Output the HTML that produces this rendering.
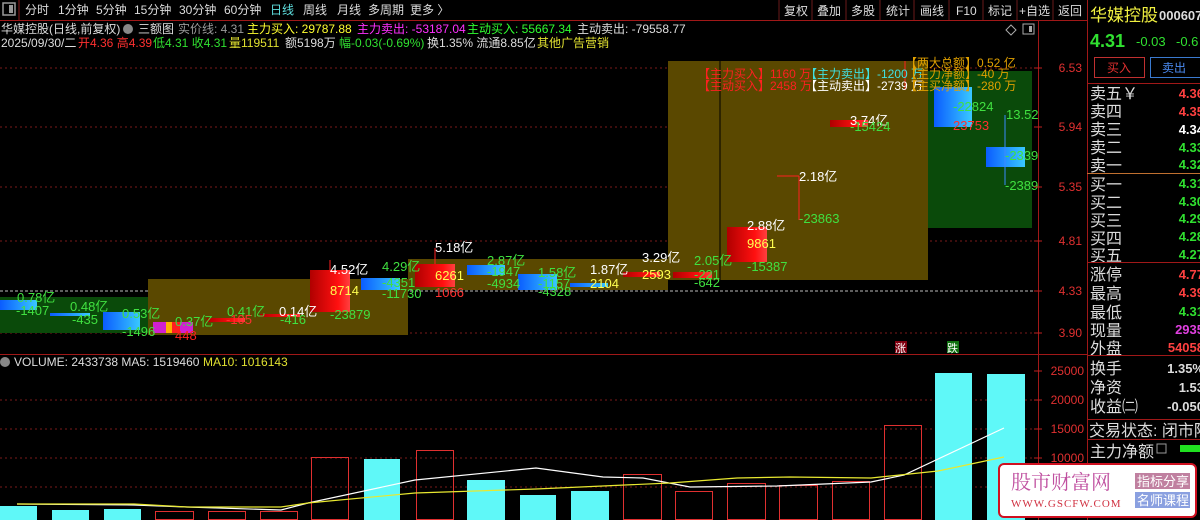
<!DOCTYPE html>
<html><head><meta charset="utf-8"><style>
html,body{margin:0;padding:0;background:#000;width:1200px;height:520px;overflow:hidden}
svg{display:block;font-family:"Liberation Sans","Noto Sans CJK SC",sans-serif}
</style></head><body>
<svg width="1200" height="520" viewBox="0 0 1200 520" xmlns="http://www.w3.org/2000/svg">
<defs>
<linearGradient id="bl" x1="0" x2="1" y1="0" y2="0"><stop offset="0" stop-color="#0a5cff"/><stop offset="1" stop-color="#39c8ff"/></linearGradient>
<linearGradient id="rd" x1="0" x2="1" y1="0" y2="0"><stop offset="0" stop-color="#b00000"/><stop offset="0.7" stop-color="#ff1010"/><stop offset="1" stop-color="#ff4040"/></linearGradient>
</defs>
<rect width="1200" height="520" fill="#000"/>
<rect x="3" y="3" width="12" height="12" fill="none" stroke="#999" stroke-width="1.5"/>
<rect x="9" y="5" width="4" height="8" fill="#999"/>
<line x1="19" y1="0" x2="19" y2="20" stroke="#8a1a1a"/>
<g font-size="12" fill="#ddd">
<text x="25" y="14">分时</text><text x="58" y="14">1分钟</text><text x="96" y="14">5分钟</text><text x="134" y="14">15分钟</text><text x="179" y="14">30分钟</text><text x="224" y="14">60分钟</text>
<text x="270" y="14" fill="#5fe0e0">日线</text><text x="303" y="14">周线</text><text x="337" y="14">月线</text><text x="368" y="14">多周期</text><text x="410" y="14">更多 〉</text>
</g>
<g font-size="12" fill="#ddd">
<text x="784" y="15">复权</text><text x="817" y="15">叠加</text><text x="851" y="15">多股</text><text x="886" y="15">统计</text><text x="920" y="15">画线</text><text x="956" y="15">F10</text><text x="988" y="15">标记</text><text x="1019" y="15">+自选</text><text x="1058" y="15">返回</text>
</g>
<g stroke="#6a1a1a"><line x1="779" y1="0" x2="779" y2="20"/><line x1="812" y1="0" x2="812" y2="20"/><line x1="846" y1="0" x2="846" y2="20"/><line x1="880" y1="0" x2="880" y2="20"/><line x1="914" y1="0" x2="914" y2="20"/><line x1="949" y1="0" x2="949" y2="20"/><line x1="983" y1="0" x2="983" y2="20"/><line x1="1017" y1="0" x2="1017" y2="20"/><line x1="1053" y1="0" x2="1053" y2="20"/></g>
<line x1="0" y1="20.5" x2="1087" y2="20.5" stroke="#a01818"/>
<g font-size="12">
<text x="1" y="33" fill="#ddd">华媒控股(日线,前复权)</text>
<circle cx="128" cy="29" r="5" fill="#888"/>
<text x="138" y="33" fill="#ddd">三额图</text>
<text x="178" y="33" fill="#999">实价线: 4.31</text>
<text x="247" y="33" fill="#ffff30">主力买入: 29787.88</text>
<text x="357" y="33" fill="#ff30ff">主力卖出: -53187.04</text>
<text x="467" y="33" fill="#30ff30">主动买入: 55667.34</text>
<text x="577" y="33" fill="#ddd">主动卖出: -79558.77</text>
<text x="1" y="47" fill="#ddd">2025/09/30/二</text>
<text x="78" y="47" fill="#ff3030">开4.36 高4.39</text>
<text x="153" y="47" fill="#30e030">低4.31 收4.31</text>
<text x="229" y="47" fill="#e0e030">量119511</text>
<text x="285" y="47" fill="#ddd">额5198万</text>
<text x="339" y="47" fill="#30e030">幅-0.03(-0.69%)</text>
<text x="427" y="47" fill="#ddd">换1.35% 流通8.85亿</text>
<text x="537" y="47" fill="#e0e030">其他广告营销</text>
</g>
<g stroke="#7a1a1a" stroke-dasharray="2,3"><line x1="0" y1="68" x2="1038" y2="68"/><line x1="0" y1="127" x2="1038" y2="127"/><line x1="0" y1="187" x2="1038" y2="187"/><line x1="0" y1="241" x2="1038" y2="241"/><line x1="0" y1="333" x2="1038" y2="333"/>
<line x1="0" y1="400" x2="1038" y2="400"/><line x1="0" y1="429" x2="1038" y2="429"/><line x1="0" y1="458" x2="1038" y2="458"/><line x1="0" y1="487" x2="1038" y2="487"/></g>
<line x1="0" y1="291" x2="1038" y2="291" stroke="#bbb" stroke-dasharray="3,2"/>
<rect x="0" y="297" width="148" height="36" fill="#0a4a0a"/>
<rect x="148" y="279" width="260" height="56" fill="#5a4800"/>
<rect x="408" y="259" width="260" height="31" fill="#5a4800"/>
<rect x="668" y="61" width="260" height="219" fill="#5a4800"/>
<line x1="720" y1="61" x2="720" y2="280" stroke="#000"/>
<rect x="928" y="71" width="104" height="157" fill="#0a4a0a"/>
<rect x="0" y="300" width="37" height="10" fill="url(#bl)"/>
<rect x="50" y="313" width="40" height="3" fill="url(#bl)"/>
<rect x="103" y="312" width="37" height="18" fill="url(#bl)"/>
<rect x="153" y="322" width="40" height="11" fill="#d020d0"/><rect x="166" y="322" width="6" height="11" fill="#ffb000"/><rect x="172" y="322" width="8" height="11" fill="#ff2020"/>
<rect x="207" y="318" width="38" height="4" fill="url(#rd)"/>
<rect x="260" y="314" width="40" height="3" fill="url(#rd)"/>
<rect x="310" y="270" width="40" height="42" fill="url(#rd)"/>
<rect x="361" y="278" width="39" height="12" fill="url(#bl)"/>
<rect x="415" y="264" width="40" height="23" fill="url(#rd)"/>
<rect x="467" y="265" width="38" height="10" fill="url(#bl)"/>
<rect x="518" y="274" width="39" height="16" fill="url(#bl)"/>
<rect x="570" y="283" width="38" height="4" fill="url(#bl)"/>
<rect x="623" y="272" width="37" height="5" fill="url(#rd)"/>
<rect x="673" y="272" width="39" height="6" fill="url(#rd)"/>
<rect x="727" y="227" width="40" height="35" fill="url(#rd)"/>
<rect x="830" y="120" width="38" height="7" fill="url(#rd)"/>
<rect x="934" y="87" width="38" height="40" fill="url(#bl)"/>
<rect x="986" y="147" width="39" height="20" fill="url(#bl)"/>
<g stroke="#ff2020"><line x1="330" y1="260" x2="330" y2="270"/><line x1="435" y1="248" x2="435" y2="264"/><line x1="799" y1="176" x2="799" y2="220"/><line x1="777" y1="176" x2="799" y2="176"/><line x1="905" y1="61" x2="905" y2="90"/></g>
<line x1="1005" y1="115" x2="1005" y2="185" stroke="#3a8aff"/>
<g font-size="13">
<text x="17" y="302" fill="#40e040">0.78亿</text><text x="16" y="315" fill="#40e040">-1407</text>
<text x="70" y="311" fill="#40e040">0.48亿</text><text x="72" y="324" fill="#40e040">-435</text>
<text x="122" y="318" fill="#40e040">0.53亿</text><text x="122" y="336" fill="#40e040">-1496</text>
<text x="175" y="326" fill="#40e040">0.37亿</text><text x="175" y="340" fill="#ff2020">448</text>
<text x="227" y="316" fill="#40e040">0.41亿</text><text x="226" y="324" fill="#ff3030">-105</text>
<text x="279" y="316" fill="#fff">0.14亿</text><text x="280" y="324" fill="#40e040">-416</text>
<text x="330" y="274" fill="#fff">4.52亿</text><text x="330" y="295" fill="#ffff50">8714</text><text x="330" y="319" fill="#40e040">-23879</text>
<text x="382" y="271" fill="#40e040">4.29亿</text><text x="382" y="287" fill="#40e040">-4351</text><text x="382" y="298" fill="#40e040">-11730</text>
<text x="435" y="252" fill="#fff">5.18亿</text><text x="435" y="280" fill="#ffff50">6261</text><text x="435" y="297" fill="#ff3030">1066</text>
<text x="487" y="265" fill="#40e040">2.87亿</text><text x="487" y="276" fill="#40e040">-1947</text><text x="487" y="288" fill="#40e040">-4934</text>
<text x="538" y="277" fill="#40e040">1.58亿</text><text x="538" y="288" fill="#40e040">-1157</text><text x="538" y="296" fill="#40e040">-4328</text>
<text x="590" y="274" fill="#fff">1.87亿</text><text x="590" y="288" fill="#ffff50">2104</text>
<text x="642" y="262" fill="#fff">3.29亿</text><text x="642" y="279" fill="#ffff50">2593</text>
<text x="694" y="265" fill="#40e040">2.05亿</text><text x="694" y="279" fill="#40e040">-221</text><text x="694" y="287" fill="#40e040">-642</text>
<text x="747" y="230" fill="#fff">2.88亿</text><text x="747" y="248" fill="#ffff50">9861</text><text x="747" y="271" fill="#40e040">-15387</text>
<text x="799" y="181" fill="#fff">2.18亿</text><text x="799" y="223" fill="#40e040">-23863</text>
<text x="850" y="125" fill="#fff">3.74亿</text><text x="850" y="131" fill="#40e040">-15424</text>
<text x="953" y="111" fill="#40e040">-22824</text><text x="953" y="130" fill="#ff3030">23753</text>
<text x="1006" y="119" fill="#40e040">13.52</text><text x="1005" y="160" fill="#40e040">-2339</text><text x="1005" y="190" fill="#40e040">-2389</text>
</g>
<g font-size="12">
<text x="698" y="78" fill="#ff2020">【主力买入】1160 万</text>
<text x="698" y="90" fill="#ff2020">【主动买入】2458 万</text>
<text x="805" y="78" fill="#40e0e0">【主力卖出】-1200 万</text>
<text x="805" y="90" fill="#fff">【主动卖出】-2739 万</text>
<text x="905" y="67" fill="#e0a000">【两大总额】0.52 亿</text>
<text x="905" y="78" fill="#e0a000">【主力净额】-40 万</text>
<text x="905" y="90" fill="#e0a000">【主买净额】-280 万</text>
</g>
<rect x="895" y="341" width="12" height="12" fill="#800010"/><text x="895" y="352" font-size="11" fill="#fff">涨</text>
<rect x="947" y="341" width="12" height="12" fill="#107010"/><text x="947" y="352" font-size="11" fill="#fff">跌</text>
<path d="M1011 25 l5 5 -5 5 -5 -5z" fill="none" stroke="#aaa"/>
<rect x="1023" y="24" width="11" height="10" fill="none" stroke="#aaa"/><rect x="1029" y="26" width="3" height="6" fill="#aaa"/>
<line x1="1038.5" y1="20" x2="1038.5" y2="520" stroke="#a01818"/>
<g stroke="#c02020"><line x1="1034" y1="68" x2="1042" y2="68"/><line x1="1034" y1="127" x2="1042" y2="127"/><line x1="1034" y1="187" x2="1042" y2="187"/><line x1="1034" y1="241" x2="1042" y2="241"/><line x1="1034" y1="291" x2="1042" y2="291"/><line x1="1034" y1="333" x2="1042" y2="333"/>
<line x1="1034" y1="371" x2="1042" y2="371"/><line x1="1034" y1="400" x2="1042" y2="400"/><line x1="1034" y1="429" x2="1042" y2="429"/><line x1="1034" y1="458" x2="1042" y2="458"/></g>
<g font-size="12" fill="#e03030" text-anchor="end"><text x="1082" y="72">6.53</text><text x="1082" y="131">5.94</text><text x="1082" y="191">5.35</text><text x="1082" y="245">4.81</text><text x="1082" y="295">4.33</text><text x="1082" y="337">3.90</text>
<text x="1084" y="375">25000</text><text x="1084" y="404">20000</text><text x="1084" y="433">15000</text><text x="1084" y="462">10000</text></g>
<line x1="0" y1="354.5" x2="1087" y2="354.5" stroke="#a01818"/>
<circle cx="5" cy="362" r="5" fill="#888"/>
<text x="14" y="366" font-size="12" fill="#ddd">VOLUME: 2433738  MA5: 1519460</text>
<text x="203" y="366" font-size="12" fill="#e0e030">MA10: 1016143</text>
<g fill="#5ff8f8"><rect x="0" y="506" width="37" height="14"/><rect x="52" y="510" width="37" height="10"/><rect x="104" y="509" width="37" height="11"/><rect x="364" y="459" width="36" height="61"/><rect x="467" y="480" width="38" height="40"/><rect x="520" y="495" width="36" height="25"/><rect x="571" y="491" width="38" height="29"/><rect x="935" y="373" width="37" height="147"/><rect x="987" y="374" width="38" height="146"/></g>
<g fill="none" stroke="#e03030"><rect x="155.5" y="511.5" width="38" height="8"/><rect x="208.5" y="511.5" width="37" height="8"/><rect x="260.5" y="511.5" width="37" height="8"/><rect x="311.5" y="457.5" width="37" height="62"/><rect x="416.5" y="450.5" width="37" height="69"/><rect x="623.5" y="474.5" width="38" height="45"/><rect x="675.5" y="491.5" width="37" height="28"/><rect x="727.5" y="483.5" width="38" height="36"/><rect x="779.5" y="485.5" width="38" height="34"/><rect x="832.5" y="481.5" width="37" height="38"/><rect x="884.5" y="425.5" width="37" height="94"/></g>
<polyline fill="none" stroke="#fff" stroke-width="1.2" points="17,504 134,505 187,507 281,510 308,503 415,480 536,468 603,477 643,478 690,487 777,486 871,482 904,475 1004,428"/>
<polyline fill="none" stroke="#e8e830" stroke-width="1.2" points="17,504 134,504 187,507 281,507 308,503 415,493 536,489 670,483 737,478 790,477 871,478 938,471 1004,457"/>
<line x1="1087.5" y1="0" x2="1087.5" y2="520" stroke="#a01818"/>
<text x="1090" y="21" font-size="17" fill="#f0f040">华媒控股</text>
<text x="1159" y="20" font-size="13" font-weight="bold" fill="#ddd">000607</text>
<text x="1090" y="47" font-size="18" font-weight="bold" fill="#30e030">4.31</text>
<text x="1136" y="46" font-size="13" fill="#30e030">-0.03</text><text x="1176" y="46" font-size="13" fill="#30e030">-0.6</text>
<rect x="1094.5" y="57.5" width="50" height="20" fill="none" stroke="#c03030"/><text x="1107" y="72" font-size="12" fill="#e03030">买入</text>
<rect x="1150.5" y="57.5" width="52" height="20" fill="none" stroke="#3a7ad0"/><text x="1162" y="72" font-size="12" fill="#4a8af0">卖出</text>
<line x1="1087" y1="83.5" x2="1200" y2="83.5" stroke="#a01818"/>
<g font-size="16" fill="#ddd"><text x="1090" y="99">卖五￥</text><text x="1090" y="117">卖四</text><text x="1090" y="135">卖三</text><text x="1090" y="153">卖二</text><text x="1090" y="171">卖一</text>
<text x="1090" y="190">买一</text><text x="1090" y="208">买二</text><text x="1090" y="226">买三</text><text x="1090" y="244">买四</text><text x="1090" y="261">买五</text>
<text x="1090" y="280">涨停</text><text x="1090" y="299">最高</text><text x="1090" y="318">最低</text><text x="1090" y="336">现量</text><text x="1090" y="354">外盘</text>
<text x="1090" y="374">换手</text><text x="1090" y="393">净资</text><text x="1090" y="412">收益㈡</text>
<text x="1089" y="436">交易状态: 闭市阶</text><text x="1090" y="457">主力净额</text></g>
<rect x="1157" y="444" width="9" height="9" fill="none" stroke="#999"/>
<rect x="1180" y="445" width="20" height="7" fill="#20e020"/>
<line x1="1087" y1="173.5" x2="1200" y2="173.5" stroke="#c07030"/>
<line x1="1087" y1="262.5" x2="1200" y2="262.5" stroke="#a01818"/>
<line x1="1087" y1="355.5" x2="1200" y2="355.5" stroke="#a01818"/>
<line x1="1087" y1="419.5" x2="1200" y2="419.5" stroke="#a01818"/>
<line x1="1087" y1="439.5" x2="1200" y2="439.5" stroke="#a01818"/>
<g font-size="13" font-weight="bold" text-anchor="end">
<text x="1204" y="98" fill="#ff4040">4.36</text><text x="1204" y="116" fill="#ff4040">4.35</text><text x="1204" y="134" fill="#fff">4.34</text><text x="1204" y="152" fill="#30e030">4.33</text><text x="1204" y="169" fill="#30e030">4.32</text>
<text x="1204" y="188" fill="#30e030">4.31</text><text x="1204" y="206" fill="#30e030">4.30</text><text x="1204" y="223" fill="#30e030">4.29</text><text x="1204" y="241" fill="#30e030">4.28</text><text x="1204" y="259" fill="#30e030">4.27</text>
<text x="1204" y="279" fill="#ff4040">4.77</text><text x="1204" y="297" fill="#ff4040">4.39</text><text x="1204" y="316" fill="#30e030">4.31</text><text x="1204" y="334" fill="#e040e0">2935</text><text x="1204" y="352" fill="#ff4040">54058</text>
<text x="1204" y="373" fill="#ddd">1.35%</text><text x="1204" y="392" fill="#ddd">1.53</text><text x="1204" y="411" fill="#ddd">-0.050</text></g>
<rect x="999" y="464" width="197" height="53" rx="5" fill="#fff" stroke="#d01020" stroke-width="2"/>
<text x="1011" y="489" font-size="20" fill="#c050a0" font-family="Liberation Serif,'Noto Serif CJK SC',serif">股市财富网</text>
<text x="1011" y="507" font-size="11" fill="#d03040" font-family="Liberation Serif,serif" letter-spacing="1">WWW.GSCFW.COM</text>
<rect x="1135" y="473" width="55" height="16" fill="#c080a0"/><text x="1137" y="486" font-size="13" fill="#fff">指标分享</text>
<rect x="1135" y="492" width="55" height="16" fill="#8aa0e0"/><text x="1137" y="505" font-size="13" fill="#fff">名师课程</text>
</svg>
</body></html>
